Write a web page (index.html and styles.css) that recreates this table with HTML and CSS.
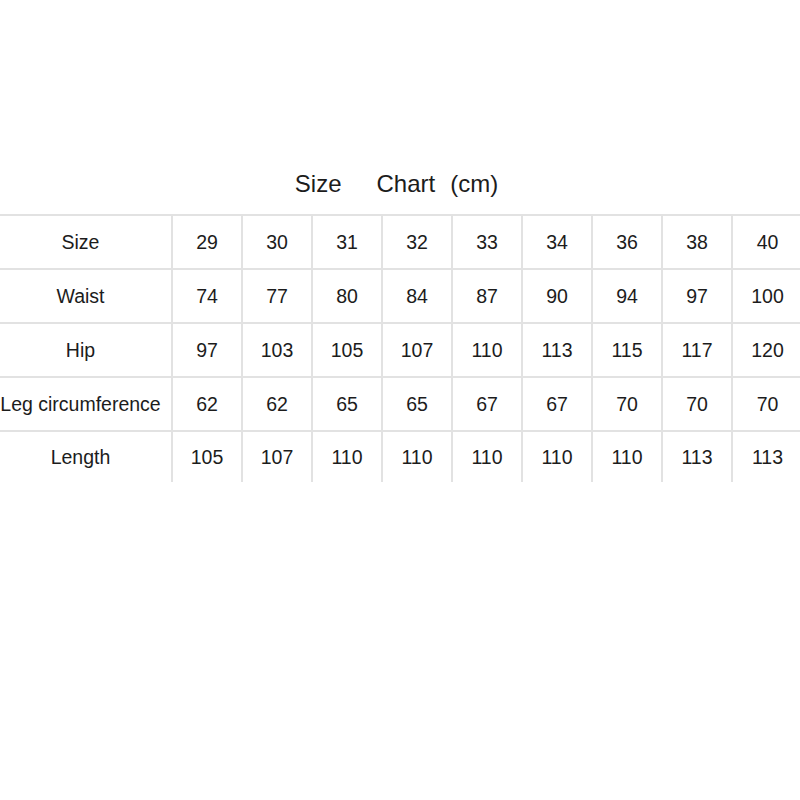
FILE: index.html
```html
<!DOCTYPE html>
<html>
<head>
<meta charset="utf-8">
<link rel="stylesheet" href="styles.css">
</head>
<body>
<div class="page">
  <h1 class="title"><span>Size</span><span class="w2">Chart</span><span class="w3">(cm)</span></h1>
  <table class="chart">
    <colgroup><col class="c-label"><col><col><col><col><col><col><col><col><col></colgroup>
    <tr><td>Size</td><td>29</td><td>30</td><td>31</td><td>32</td><td>33</td><td>34</td><td>36</td><td>38</td><td>40</td></tr>
    <tr><td>Waist</td><td>74</td><td>77</td><td>80</td><td>84</td><td>87</td><td>90</td><td>94</td><td>97</td><td>100</td></tr>
    <tr><td>Hip</td><td>97</td><td>103</td><td>105</td><td>107</td><td>110</td><td>113</td><td>115</td><td>117</td><td>120</td></tr>
    <tr><td>Leg circumference</td><td>62</td><td>62</td><td>65</td><td>65</td><td>67</td><td>67</td><td>70</td><td>70</td><td>70</td></tr>
    <tr class="last"><td>Length</td><td>105</td><td>107</td><td>110</td><td>110</td><td>110</td><td>110</td><td>110</td><td>113</td><td>113</td></tr>
  </table>
</div>
</body>
</html>
```
FILE: styles.css
```css
html, body {
  margin: 0;
  padding: 0;
  background: #ffffff;
  overflow: hidden;
}
.page {
  width: 800px;
  height: 800px;
  padding-top: 170px;
  box-sizing: border-box;
  font-family: "Liberation Sans", Arial, sans-serif;
  color: #1c1c1c;
}
.title {
  margin: 0 0 16px 0;
  display: flex;
  justify-content: center;
  padding-right: 7px;
  font-size: 24px;
  font-weight: normal;
  line-height: 28px;
  color: #1c1c1c;
}
.title .w2 { margin-left: 35px; }
.title .w3 { margin-left: 15px; }
.chart {
  border-collapse: collapse;
  table-layout: fixed;
  width: 802px;
  font-size: 19.5px;
}
.chart col { width: 70px; }
.chart col.c-label { width: 172px; }
.chart td {
  height: 52px;
  padding: 0;
  text-align: center;
  vertical-align: middle;
  border-top: 2px solid #e2e2e2;
  border-left: 2px solid #e2e2e2;
  white-space: nowrap;
  overflow: visible;
}
.chart td:first-child {
  border-left: none;
  padding-right: 10px;
}
.chart tr.last td { height: 50px; }
```
